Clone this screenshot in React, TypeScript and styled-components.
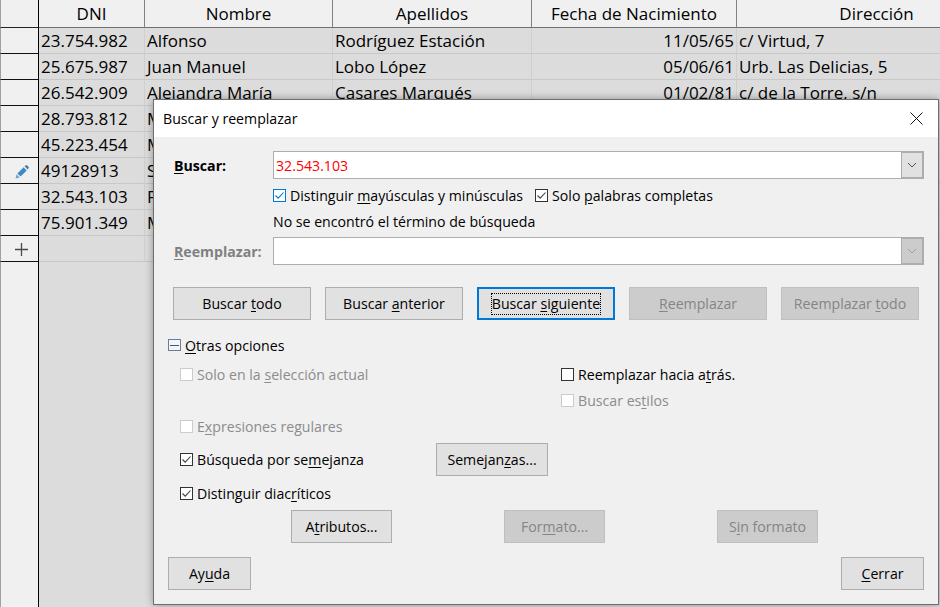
import React from "react";
import styled, { createGlobalStyle } from "styled-components";

const Global = createGlobalStyle`
  html, body { margin: 0; padding: 0; width: 940px; height: 607px; overflow: hidden; background: #dcdcdc; }
  #root { width: 940px; height: 607px; }
`;

const Page = styled.div`
  position: relative;
  width: 940px;
  height: 607px;
  overflow: hidden;
  background: #dcdcdc;
  font-family: "Open Sans", "Noto Sans", sans-serif;
  color: #000;
`;

const Grid = styled.div`
  display: grid;
  width: 1017px;
  height: 607px;
  grid-template-columns: 39px 106px 188px 199px 205px 280px;
  grid-template-rows: 28px repeat(9, 26px) 1fr;
`;

const HeaderCell = styled.div<{ $corner?: boolean }>`
  box-sizing: border-box;
  border-bottom: 1px solid ${(p) => (p.$corner ? "#222" : "#707070")};
  border-right: 1px solid ${(p) => (p.$corner ? "#000" : "#808080")};
  border-left: ${(p) => (p.$corner ? "1px solid #a0a0a0" : "none")};
  background: #f0f0f0;
  font-size: 17px;
  line-height: 27px;
  text-align: center;
`;

const RowHead = styled.div<{ $last?: boolean }>`
  box-sizing: border-box;
  padding-left: 4px;
  border-left: 1px solid #a0a0a0;
  border-right: 1px solid #000;
  border-bottom: ${(p) => (p.$last ? "none" : "1px solid #111")};
  background: #f0f0f0;
  display: flex;
  align-items: center;
  justify-content: center;
`;

const Filler = styled.div`
  grid-column: 2 / 7;
`;

const Cell = styled.div<{ $right?: boolean }>`
  box-sizing: border-box;
  padding: 0 2px;
  background: #dcdcdc;
  border-right: 1px solid #cfcfcf;
  border-bottom: 1px solid #c8c8c8;
  font-size: 17px;
  line-height: 25px;
  white-space: nowrap;
  overflow: hidden;
  text-align: ${(p) => (p.$right ? "right" : "left")};
`;

const Dialog = styled.div`
  position: absolute;
  left: 153px;
  top: 99px;
  width: 786px;
  height: 506px;
  box-sizing: border-box;
  border: 1px solid #6d6d6d;
  box-shadow: 0 0 8px rgba(0, 0, 0, 0.35);
  background: #f0f0f0;
  display: flex;
  flex-direction: column;
  font-size: 14.15px;
`;

const TitleBar = styled.div`
  height: 37px;
  box-sizing: border-box;
  flex: none;
  background: #fff;
  display: flex;
  align-items: center;
  justify-content: space-between;
  padding: 0 15px 0 9px;
`;

const Body = styled.div`
  flex: 1;
  padding: 14px;
  display: flex;
  flex-direction: column;
`;

const FieldRow = styled.div<{ $top?: number }>`
  display: grid;
  grid-template-columns: 99px 651px;
  align-items: center;
  height: 28px;
  margin: ${(p) => p.$top ?? 0}px 0 0 6px;
`;

const FieldLabel = styled.span<{ $off?: boolean }>`
  font-weight: 700;
  color: ${(p) => (p.$off ? "#808080" : "#000")};
`;

const Combo = styled.div`
  height: 28px;
  box-sizing: border-box;
  border: 1px solid #adadad;
  background: #fff;
  display: flex;
  align-items: stretch;
  color: #ff0000;
`;

const ComboText = styled.div`
  flex: 1;
  padding: 0 2px;
  line-height: 27px;
`;

const ComboArrow = styled.div<{ $off?: boolean }>`
  width: 20px;
  border: 1px solid #adadad;
  background: ${(p) => (p.$off ? "#cccccc" : "#e1e1e1")};
  display: flex;
  align-items: center;
  justify-content: center;
`;

const CheckLine = styled.div`
  display: flex;
  gap: 12px;
  margin: 6px 0 0 105px;
  height: 20px;
`;

const Notice = styled.div`
  margin: 7px 0 0 105px;
  height: 20px;
  line-height: 20px;
`;

const Check = styled.label<{ $off?: boolean }>`
  display: inline-flex;
  align-items: center;
  gap: 4px;
  height: 20px;
  white-space: nowrap;
  color: ${(p) => (p.$off ? "#8c8c8c" : "#000")};
`;

const Box = styled.span<{ $off?: boolean; $focus?: boolean }>`
  width: 11px;
  height: 11px;
  flex: none;
  background: #fff;
  border: 1px solid ${(p) => (p.$off ? "#cccccc" : p.$focus ? "#0078d7" : "#333")};
  display: flex;
  align-items: center;
  justify-content: center;
`;

const ActionRow = styled.div`
  display: flex;
  gap: 14px;
  margin: 22px 0 0 5px;
`;

const Btn = styled.button<{ $off?: boolean; $focus?: boolean; $w: number }>`
  width: ${(p) => p.$w}px;
  height: 33px;
  box-sizing: border-box;
  padding: 0;
  font: inherit;
  color: ${(p) => (p.$off ? "#858585" : "#000")};
  background: ${(p) => (p.$off ? "#cccccc" : "#e1e1e1")};
  border: ${(p) => (p.$focus ? "2px solid #0078d7" : p.$off ? "1px solid #bfbfbf" : "1px solid #adadad")};
  display: flex;
  align-items: center;
  justify-content: center;
  flex: none;
`;

const FocusInner = styled.span`
  display: block;
  border: 1px dotted #000;
  line-height: 20px;
`;

const OptionsHead = styled.div`
  display: flex;
  align-items: center;
  gap: 4px;
  margin: 15px 0 0 0;
  height: 20px;
`;

const Toggle = styled.span`
  width: 11px;
  height: 10px;
  border: 1px solid #6f7c99;
  background: #f4f4f4;
  display: flex;
  align-items: center;
  justify-content: center;
`;

const ToggleBar = styled.span`
  width: 9px;
  height: 1px;
  background: #31579f;
`;

const Options = styled.div`
  display: grid;
  grid-template-columns: 381px 1fr;
  grid-template-rows: 26px 26px 28px 37px 30px;
  margin: 6px 0 0 12px;
  align-items: center;
`;

const Similar = styled.div`
  display: flex;
  align-items: center;
  justify-content: space-between;
  width: 368px;
`;

const Wide = styled.div`
  grid-column: 1 / 3;
`;

const AttrRow = styled.div`
  display: flex;
  gap: 112px;
  margin: 2px 0 0 123px;
`;

const BottomRow = styled.div`
  display: flex;
  justify-content: space-between;
  margin-top: 14px;
`;

const U = styled.span`
  text-decoration: underline;
  text-underline-offset: 2px;
`;

const rows: [string, string, string, string, string][] = [
  ["23.754.982", "Alfonso", "Rodríguez Estación", "11/05/65", "c/ Virtud, 7"],
  ["25.675.987", "Juan Manuel", "Lobo López", "05/06/61", "Urb. Las Delicias, 5"],
  ["26.542.909", "Alejandra María", "Casares Marqués", "01/02/81", "c/ de la Torre, s/n"],
  ["28.793.812", "M", "", "", ""],
  ["45.223.454", "M", "", "", ""],
  ["49128913", "S", "", "", ""],
  ["32.543.103", "F", "", "", ""],
  ["75.901.349", "M", "", "", ""],
];

const Tick = ({ color = "#404040" }: { color?: string }) => (
  <svg width="11" height="11" viewBox="0 0 11 11" fill="none">
    <path d="M1.5 5.5 L4.2 8.2 L9.5 2.5" stroke={color} strokeWidth="1.1" />
  </svg>
);

const Chevron = ({ color }: { color: string }) => (
  <svg width="10" height="6" viewBox="0 0 10 6" fill="none">
    <path d="M1 1 L5 5 L9 1" stroke={color} strokeWidth="1" />
  </svg>
);

const PencilSvg = styled.svg`
  margin-top: 2px;
`;

const Pencil = () => (
  <PencilSvg width="14" height="14" viewBox="0 0 14 14">
    <path d="M0.5 13.5 L1.6 9.3 L4.7 12.4 Z" fill="#6ba3d6" />
    <path d="M2.4 8.5 L8.6 2.3 L11.7 5.4 L5.5 11.6 Z" fill="#3f87c5" />
    <path d="M9.6 1.3 L10.4 0.6 C11 0.1 11.9 0.1 12.5 0.7 L13.3 1.5 C13.9 2.1 13.9 3 13.4 3.6 L12.7 4.4 Z" fill="#3a7fba" />
  </PencilSvg>
);

const PlusSvg = styled.svg`
  margin-top: 2px;
`;

const Plus = () => (
  <PlusSvg width="13" height="13" viewBox="0 0 13 13">
    <path d="M6.5 0 V13 M0 6.5 H13" stroke="#4a4a4a" strokeWidth="1.3" />
  </PlusSvg>
);

const Close = () => (
  <svg width="13" height="13" viewBox="0 0 13 13" fill="none">
    <path d="M0.5 0.5 L12.5 12.5 M12.5 0.5 L0.5 12.5" stroke="#111" strokeWidth="1" />
  </svg>
);

export default function App() {
  return (
    <Page>
      <Global />
      <Grid>
        <HeaderCell $corner />
        <HeaderCell>DNI</HeaderCell>
        <HeaderCell>Nombre</HeaderCell>
        <HeaderCell>Apellidos</HeaderCell>
        <HeaderCell>Fecha de Nacimiento</HeaderCell>
        <HeaderCell>Dirección</HeaderCell>
        {rows.map((r, i) => (
          <React.Fragment key={i}>
            <RowHead>{i === 5 ? <Pencil /> : null}</RowHead>
            <Cell>{r[0]}</Cell>
            <Cell>{r[1]}</Cell>
            <Cell>{r[2]}</Cell>
            <Cell $right>{r[3]}</Cell>
            <Cell>{r[4]}</Cell>
          </React.Fragment>
        ))}
        <RowHead><Plus /></RowHead>
        <Cell /><Cell /><Cell /><Cell /><Cell />
        <RowHead $last />
        <Filler />
      </Grid>

      <Dialog>
        <TitleBar>
          <span>Buscar y reemplazar</span>
          <Close />
        </TitleBar>
        <Body>
          <FieldRow>
            <FieldLabel><U>B</U>uscar:</FieldLabel>
            <Combo>
              <ComboText>32.543.103</ComboText>
              <ComboArrow><Chevron color="#555" /></ComboArrow>
            </Combo>
          </FieldRow>
          <CheckLine>
            <Check><Box $focus><Tick color="#0078d7" /></Box><span>Distinguir <U>m</U>ayúsculas y minúsculas</span></Check>
            <Check><Box><Tick /></Box><span>Solo <U>p</U>alabras completas</span></Check>
          </CheckLine>
          <Notice>No se encontró el término de búsqueda</Notice>
          <FieldRow $top={5}>
            <FieldLabel $off><U>R</U>eemplazar:</FieldLabel>
            <Combo>
              <ComboText />
              <ComboArrow $off><Chevron color="#a0a0a0" /></ComboArrow>
            </Combo>
          </FieldRow>
          <ActionRow>
            <Btn $w={138}><span>Buscar <U>t</U>odo</span></Btn>
            <Btn $w={138}><span>Buscar <U>a</U>nterior</span></Btn>
            <Btn $w={138} $focus><FocusInner>Buscar <U>s</U>iguiente</FocusInner></Btn>
            <Btn $w={138} $off><span><U>R</U>eemplazar</span></Btn>
            <Btn $w={138} $off><span>Reemplazar <U>t</U>odo</span></Btn>
          </ActionRow>
          <OptionsHead>
            <Toggle><ToggleBar /></Toggle>
            <span><U>O</U>tras opciones</span>
          </OptionsHead>
          <Options>
            <Check $off><Box $off /><span>Solo en la <U>s</U>elección actual</span></Check>
            <Check><Box /><span>Reemplazar hacia a<U>t</U>rás.</span></Check>
            <span />
            <Check $off><Box $off /><span>Buscar es<U>t</U>ilos</span></Check>
            <Wide><Check $off><Box $off /><span>E<U>x</U>presiones regulares</span></Check></Wide>
            <Wide>
              <Similar>
                <Check><Box><Tick /></Box><span>Búsqueda por se<U>m</U>ejanza</span></Check>
                <Btn $w={112}><span>Semejan<U>z</U>as...</span></Btn>
              </Similar>
            </Wide>
            <Wide><Check><Box><Tick /></Box><span>Distinguir diac<U>r</U>íticos</span></Check></Wide>
          </Options>
          <AttrRow>
            <Btn $w={101}><span>A<U>t</U>ributos...</span></Btn>
            <Btn $w={101} $off><span>For<U>m</U>ato...</span></Btn>
            <Btn $w={101} $off><span>S<U>i</U>n formato</span></Btn>
          </AttrRow>
          <BottomRow>
            <Btn $w={83}><span>Ay<U>u</U>da</span></Btn>
            <Btn $w={83}><span><U>C</U>errar</span></Btn>
          </BottomRow>
        </Body>
      </Dialog>
    </Page>
  );
}
